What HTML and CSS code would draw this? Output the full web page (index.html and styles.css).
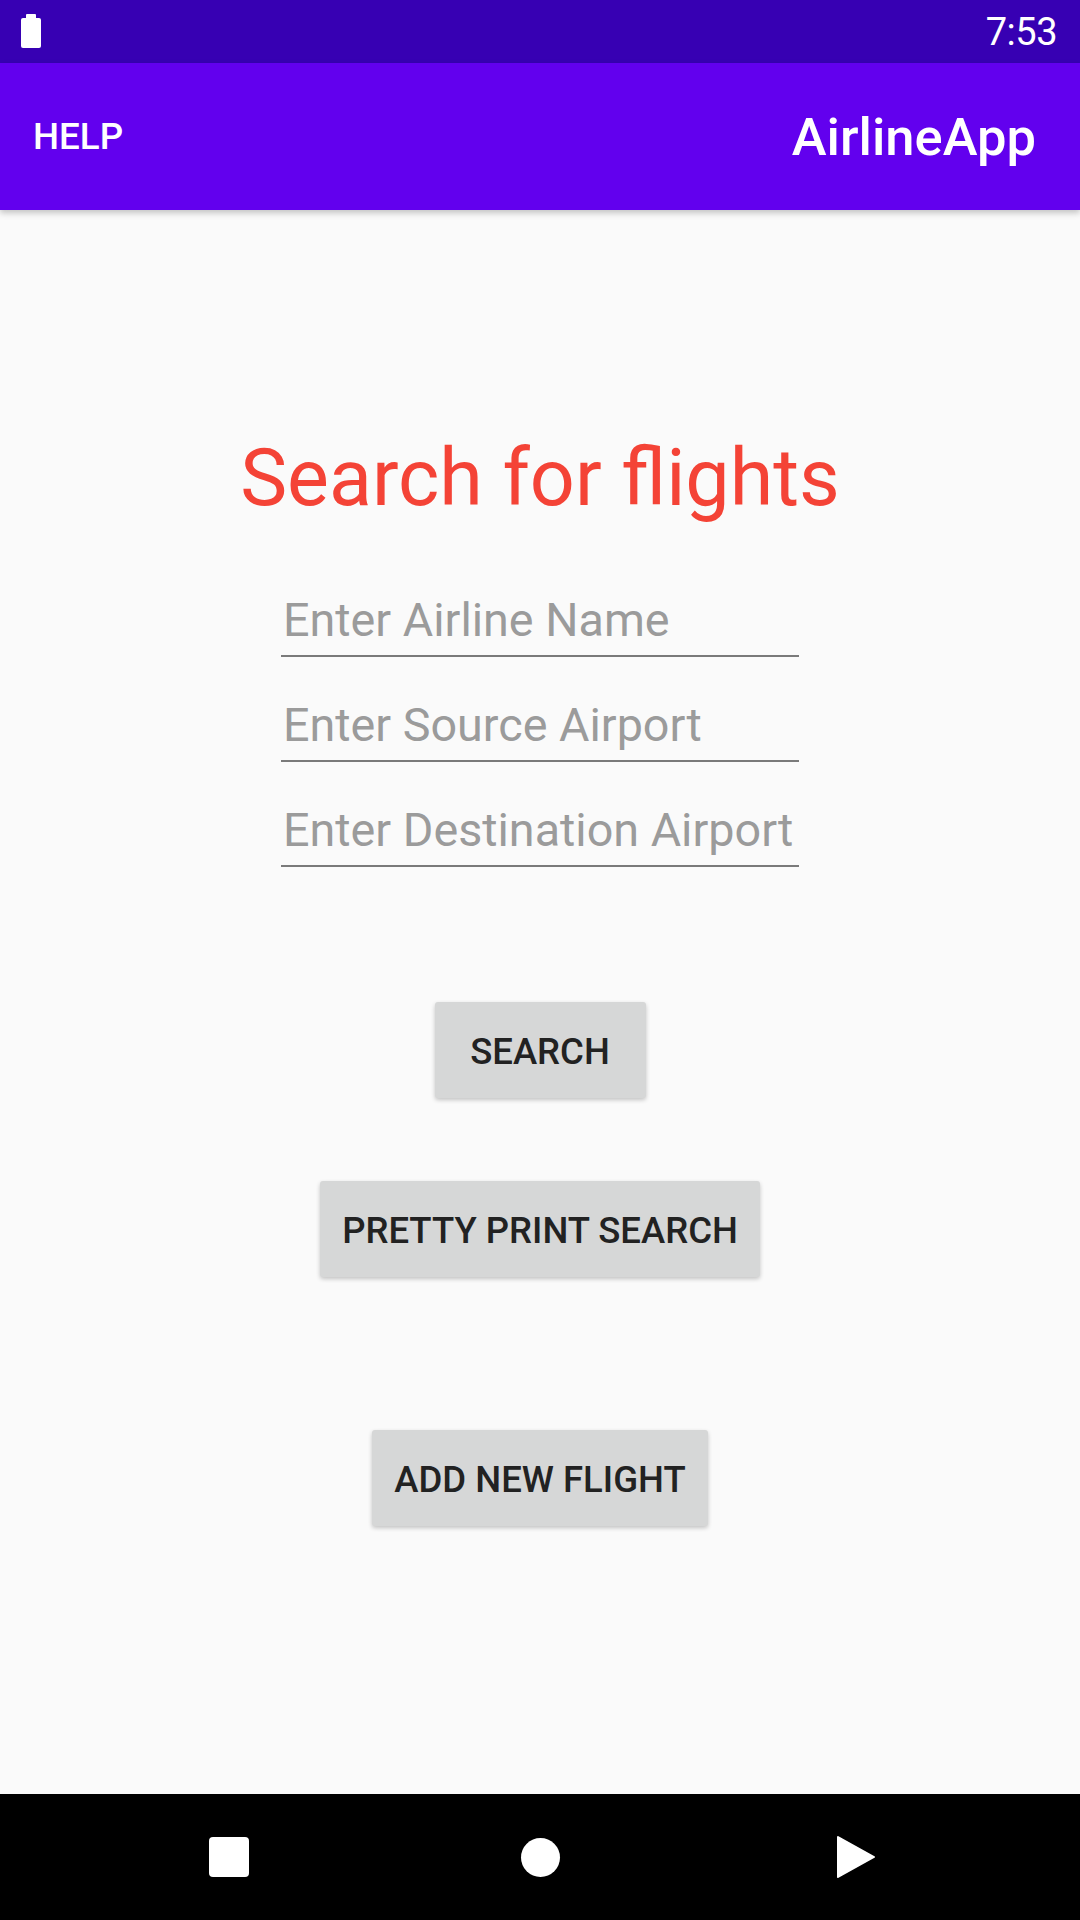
FILE: index.html
```html
<!DOCTYPE html>
<html>
<head>
<meta charset="utf-8">
<link rel="stylesheet" href="styles.css">
</head>
<body>
<div class="screen">
  <div class="status">
    <div class="battery"><span class="nub"></span><span class="cell"></span></div>
    <div class="time">7:53</div>
  </div>
  <div class="appbar">
    <div class="help">HELP</div>
    <div class="apptitle">AirlineApp</div>
  </div>
  <div class="content">
    <h1 class="title">Search for flights</h1>
    <div class="fields">
      <div class="field"><span class="hint">Enter Airline Name</span></div>
      <div class="field"><span class="hint">Enter Source Airport</span></div>
      <div class="field"><span class="hint">Enter Destination Airport</span></div>
    </div>
    <div class="btn btn-search">SEARCH</div>
    <div class="btn btn-pretty">PRETTY PRINT SEARCH</div>
    <div class="btn btn-add">ADD NEW FLIGHT</div>
  </div>
  <div class="nav">
    <div class="slot"><span class="sq"></span></div>
    <div class="slot"><span class="circ"></span></div>
    <div class="slot slot-back">
      <svg width="40" height="44" viewBox="0 0 40 44"><path d="M2 2 L38 22 L2 42 Z" fill="#fff" stroke="#fff" stroke-width="2" stroke-linejoin="round"/></svg>
    </div>
  </div>
</div>
</body>
</html>
```
FILE: styles.css
```css
* { box-sizing: border-box; }
html, body { margin: 0; padding: 0; }
body {
  width: 1080px;
  height: 1920px;
  font-family: Roboto, "Noto Sans", sans-serif;
  background: #fafafa;
  overflow: hidden;
}
.screen {
  width: 1080px;
  height: 1920px;
  display: flex;
  flex-direction: column;
}
.status {
  height: 63px;
  background: #3700b3;
  display: flex;
  align-items: center;
  justify-content: space-between;
  padding: 0 23px 0 21px;
  color: #fff;
}
.battery {
  width: 20px;
  height: 34px;
  display: flex;
  flex-direction: column;
  align-items: center;
  margin-top: -1px;
}
.battery .nub {
  width: 10px;
  height: 4px;
  background: #fff;
  border-radius: 1px 1px 0 0;
}
.battery .cell {
  width: 20px;
  height: 30px;
  background: #fff;
  border-radius: 2px;
}
.time {
  font-size: 38px;
  font-weight: 400;
  line-height: 1;
  letter-spacing: -0.5px;
}
.appbar {
  height: 147px;
  background: #6200ee;
  display: flex;
  align-items: center;
  justify-content: space-between;
  padding: 0 44px 0 33px;
  color: #fff;
  box-shadow: 0 3px 6px rgba(0,0,0,0.22);
  position: relative;
  z-index: 1;
}
.help {
  font-size: 36.75px;
  font-weight: 500;
}
.apptitle {
  font-size: 52.5px;
  font-weight: 500;
}
.content {
  flex: 1;
  display: flex;
  flex-direction: column;
  align-items: center;
  padding-top: 222px;
}
.title {
  margin: 0;
  font-size: 79px;
  font-weight: 400;
  line-height: 92px;
  color: #f44336;
}
.fields {
  margin-top: 28px;
  width: 518px;
  display: flex;
  flex-direction: column;
}
.field {
  height: 105px;
  padding: 40px 0 7px 2px;
  border-bottom: 2px solid #7a7a7a;
}
.hint {
  display: block;
  font-size: 46.7px;
  line-height: 56px;
  color: #9b9b9b;
  white-space: nowrap;
}
.btn {
  height: 96px;
  min-width: 211px;
  padding: 2px 22px 0;
  background: #d6d7d7;
  border-radius: 3px;
  box-shadow: 0 2px 4px rgba(0,0,0,0.22);
  display: flex;
  align-items: center;
  justify-content: center;
  font-size: 36.5px;
  font-weight: 500;
  color: #222;
}
.btn-search { margin-top: 135px; }
.btn-pretty { margin-top: 83px; }
.btn-add { margin-top: 153px; }
.nav {
  height: 126px;
  background: #000;
  display: grid;
  grid-template-columns: 311px 311px 311px;
  justify-content: center;
  align-items: center;
}
.slot {
  display: flex;
  justify-content: center;
  align-items: center;
}
.slot-back { padding-left: 10px; }
.sq {
  width: 40px;
  height: 40px;
  background: #fff;
  border-radius: 4px;
}
.circ {
  width: 39px;
  height: 39px;
  background: #fff;
  border-radius: 50%;
}
.slot svg { display: block; }
```
